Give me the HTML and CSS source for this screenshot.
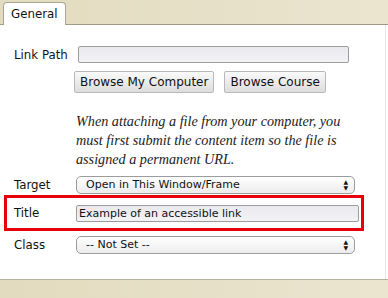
FILE: index.html
```html
<!doctype html>
<html>
    <head>
        <meta charset="utf-8" />
        <title>Link Properties</title>
        <link rel="stylesheet" href="styles.css">
    </head>
    <body>
        <div class="tabs">
            <div class="tab">General</div>
        </div>
        <div class="panel">
            <div class="row row-path">
                <label>Link Path</label>
                <input type="text" class="text-input path-input" />
            </div>
            <div class="buttons">
                <button class="btn">Browse My Computer</button>
                <button class="btn">Browse Course</button>
            </div>
            <p class="note">When attaching a file from your computer, you must first submit the content item so the file is assigned a permanent URL.</p>
            <div class="row row-target">
                <label>Target</label>
                <div class="select">Open in This Window/Frame<span class="arrows">&#9650;<br>&#9660;</span></div>
            </div>
            <div class="highlight">
                <div class="row">
                    <label>Title</label>
                    <input type="text" class="text-input title-input" value="Example of an accessible link" />
                </div>
            </div>
            <div class="row row-class">
                <label>Class</label>
                <div class="select">-- Not Set --<span class="arrows">&#9650;<br>&#9660;</span></div>
            </div>
        </div>
        <div class="footer"></div>
    </body>
</html>
```
FILE: styles.css
```css
body {
    margin: 0;
    width: 388px;
    height: 298px;
    overflow: hidden;
    background: #fff;
    font-family: "DejaVu Sans", sans-serif;
    font-size: 12px;
    color: #111;
}
.tabs {
    height: 25px;
    background: linear-gradient(to right, #e2dbbf, #ebe5d0);
    border-bottom: 1px solid #9f9a88;
    display: flex;
    align-items: flex-end;
    padding-left: 3px;
    box-sizing: border-box;
}
.tab {
    background: #fff;
    border: 1px solid #a9a595;
    border-bottom: none;
    border-radius: 4px 4px 0 0;
    height: 23px;
    width: 63px;
    box-sizing: border-box;
    padding: 4px 0 0 7px;
    margin-bottom: -1px;
    font-size: 11.8px;
}
.panel {
    height: 254px;
    border-right: 1px solid #e4e4e4;
    margin-right: 2px;
    padding-top: 21px;
    box-sizing: border-box;
}
.row {
    display: flex;
    align-items: center;
    padding-left: 14px;
}
.row label {
    width: 62px;
    font-size: 11.8px;
}
.text-input {
    height: 17px;
    box-sizing: border-box;
    border: 1px solid #9c9c9c;
    border-radius: 2px;
    background: linear-gradient(#e9e9ee, #f3f3f6);
    font-family: "DejaVu Sans", sans-serif;
    font-size: 11px;
    color: #111;
    padding: 0 2px;
    margin: 0;
}
.path-input {
    width: 271px;
    margin-left: 2px;
}
.buttons {
    display: flex;
    gap: 10px;
    padding: 8px 0 0 74px;
}
.btn {
    height: 22px;
    padding: 0 5px;
    border: 1px solid #b9b9b9;
    border-radius: 2px;
    background: linear-gradient(#fafafa, #dcdcdc);
    font-family: "DejaVu Sans", sans-serif;
    font-size: 12px;
    color: #111;
}
.note {
    margin: 19px 20px 0 76px;
    font-family: "Liberation Serif", serif;
    font-style: italic;
    font-size: 14.2px;
    line-height: 19px;
    color: #222;
}
.select {
    position: relative;
    height: 18px;
    box-sizing: border-box;
    border: 1px solid #9c9c9c;
    border-radius: 5px;
    background: linear-gradient(#ffffff, #ececec);
    padding: 1px 0 0 9px;
    font-size: 11px;
    width: 279px;
}
.arrows {
    position: absolute;
    right: 6px;
    top: 2px;
    font-size: 6px;
    line-height: 6px;
}
.row-target {
    margin-top: 7px;
}
.highlight {
    margin: 1px 21px 0 4px;
    border: 3px solid #e8000b;
    height: 36px;
    box-sizing: border-box;
    display: flex;
    align-items: center;
}
.highlight .row {
    padding-left: 7px;
}
.title-input {
    width: 283px;
}
.row-class {
    margin-top: 5px;
}
.footer {
    height: 19px;
    border-top: 1px solid #b8b4a4;
    background: linear-gradient(to right, #e2dbbf, #ebe5d0);
}
```
